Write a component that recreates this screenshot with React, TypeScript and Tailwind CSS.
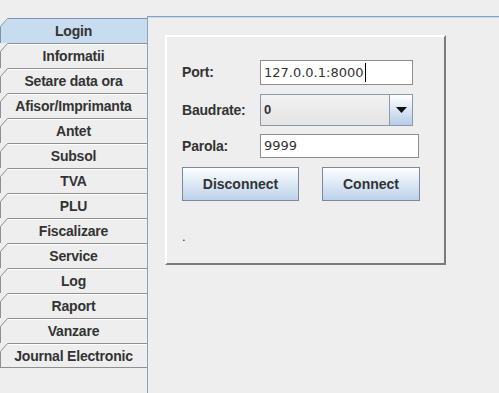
const tabs = [
  "Login",
  "Informatii",
  "Setare data ora",
  "Afisor/Imprimanta",
  "Antet",
  "Subsol",
  "TVA",
  "PLU",
  "Fiscalizare",
  "Service",
  "Log",
  "Raport",
  "Vanzare",
  "Journal Electronic",
];

const font = { fontFamily: '"Liberation Sans", Arial, sans-serif' };

function Tab({ label, selected, last }: { label: string; selected: boolean; last: boolean }) {
  return (
    <div className="relative flex h-[25px] w-[147px] items-center justify-center">
      <svg className="absolute inset-0" width="147" height="26">
        {selected && <path d="M0 25 V9 L8 1 H147 V25 Z" fill="#c8dcf0" />}
        <path
          d="M0.5 25 V8.5 L7.5 0.5 H147"
          fill="none"
          stroke={selected ? "#7d93b3" : "#8f8f8f"}
          strokeWidth="1"
        />
        {!selected && <path d="M8 1.5 H146" stroke="#ffffff" strokeWidth="1" />}
        {last && <path d="M0 24.5 H147" stroke="#8f8f8f" strokeWidth="1" />}
      </svg>
      <span className="relative pt-[1px] text-[14px] font-bold tracking-[-0.2px] text-[#333333]">{label}</span>
    </div>
  );
}

function Field({ value, width, caret }: { value: string; width: string; caret?: boolean }) {
  return (
    <div
      className={`flex h-full items-center border border-[#8e8e8e] bg-white pl-[3px] text-[13px] text-[#333333] ${width}`}
      style={{ fontFamily: '"DejaVu Sans", sans-serif' }}
    >
      <span>{value}</span>
      {caret && <span className="ml-[1px] h-[19px] w-[1px] bg-black" />}
    </div>
  );
}

export default function App() {
  return (
    <div className="flex h-[393px] w-[499px] bg-[#eeeeee] pt-[16px]" style={font}>
      <div className="mt-[2px] flex flex-col">
        {tabs.map((t, i) => (
          <Tab key={t} label={t} selected={i === 0} last={i === tabs.length - 1} />
        ))}
      </div>
      <div className="flex-1 border-l border-t border-[#8aa2c2]">
        <div className="h-full border-t border-[#c8dcf0]">
          <div className="ml-[17px] mt-[17px] flex h-[230px] w-[281px] flex-col border-b-2 border-l-2 border-r-2 border-t-2 border-b-[#7b7b7b] border-l-white border-r-[#7b7b7b] border-t-white pl-[15px] pt-[23px]">
            <div className="flex h-[25px] items-center">
              <span className="w-[78px] text-[14px] font-bold tracking-[-0.2px] text-[#333333]">Port:</span>
              <Field value="127.0.0.1:8000" width="w-[153px]" caret />
            </div>
            <div className="mt-[9px] flex h-[32px] items-center">
              <span className="w-[78px] text-[14px] font-bold tracking-[-0.2px] text-[#333333]">Baudrate:</span>
              <div className="flex h-full w-[153px] border border-[#8e98a6]">
                <div className="flex flex-1 items-center bg-gradient-to-b from-[#f2f2f2] to-[#e4e4e4] pl-[3px] text-[13px] font-bold text-[#333333]">
                  0
                </div>
                <div className="flex w-[23px] items-center justify-center border-l border-[#8e98a6] bg-gradient-to-b from-[#ffffff] to-[#b6cde8]">
                  <svg width="11" height="6" viewBox="0 0 11 6">
                    <path d="M0 0 H11 L5.5 6 Z" fill="#111111" />
                  </svg>
                </div>
              </div>
            </div>
            <div className="mt-[8px] flex h-[24px] items-center">
              <span className="w-[78px] text-[14px] font-bold tracking-[-0.2px] text-[#333333]">Parola:</span>
              <Field value="9999" width="w-[159px]" />
            </div>
            <div className="mt-[9px] flex h-[34px] gap-[23px]">
              <button className="w-[117px] border border-[#7a8a9c] bg-gradient-to-b from-[#fdfeff] to-[#bcd2ea] text-[14px] font-bold text-[#333333]">
                Disconnect
              </button>
              <button className="w-[98px] border border-[#7a8a9c] bg-gradient-to-b from-[#fdfeff] to-[#bcd2ea] text-[14px] font-bold text-[#333333]">
                Connect
              </button>
            </div>
            <div className="mt-[26px] pl-[0px] text-[13px] text-[#333333]">.</div>
          </div>
        </div>
      </div>
    </div>
  );
}
